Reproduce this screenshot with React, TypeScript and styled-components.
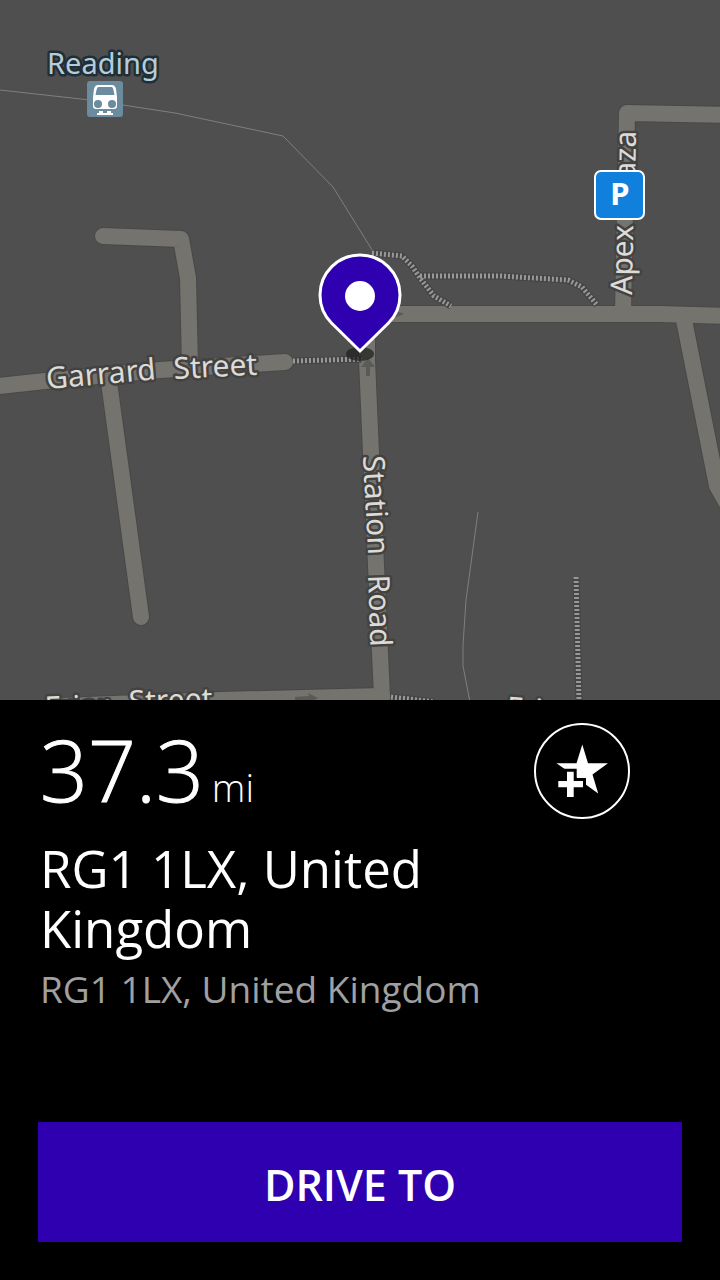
import React from "react";
import styled, { createGlobalStyle } from "styled-components";

const GlobalStyle = createGlobalStyle`
  *, *::before, *::after { box-sizing: border-box; }
  body {
    margin: 0;
    background: #000;
    color: #fff;
    font-family: "Open Sans", "Noto Sans", sans-serif;
  }
`;

const Page = styled.main`
  display: flex;
  flex-direction: column;
  min-height: 100vh;
`;

const MapCanvas = styled.svg`
  display: block;
  width: 100%;
  height: auto;
  background: #4f4f4f;
`;

const RoadEdge = styled.path`
  fill: none;
  stroke: #484847;
  stroke-width: 18px;
  stroke-linecap: round;
  stroke-linejoin: round;
`;

const RoadFill = styled(RoadEdge)`
  stroke: #74736e;
  stroke-width: 16px;
`;

const Rail = styled.path`
  fill: none;
  stroke: #7f7f7f;
  stroke-width: 1px;
`;

const FootpathEdge = styled.path`
  fill: none;
  stroke: #444;
  stroke-width: 7px;
`;

const Footpath = styled.path`
  fill: none;
  stroke: #989898;
  stroke-width: 5px;
  stroke-dasharray: 2 2;
`;

const StreetLabel = styled.text`
  font-family: "Noto Sans", "Open Sans", sans-serif;
  font-size: 30px;
  fill: #dcdbd7;
  stroke: #434240;
  stroke-width: 5px;
  stroke-linejoin: round;
  paint-order: stroke;
`;

const StationLabel = styled(StreetLabel)`
  font-size: 29px;
  fill: #b4cddb;
  stroke: #222e35;
`;

const ParkingLetter = styled.text`
  font-family: "Noto Sans", "Open Sans", sans-serif;
  font-size: 31px;
  font-weight: 700;
  fill: #fff;
  text-anchor: middle;
`;

const Panel = styled.section`
  flex: 1;
  display: flex;
  flex-direction: column;
  padding: 22px 38px 38px;
`;

const Details = styled.div`
  padding: 0 2px 40px;
`;

const Summary = styled.div`
  display: flex;
  justify-content: space-between;
  align-items: flex-start;
  height: 116px;
  padding-right: 50px;
`;

const Distance = styled.p`
  margin: 0;
  font-size: 84px;
  line-height: 96px;
  font-weight: 300;
  -webkit-text-stroke: 1px #fff;
`;

const Unit = styled.span`
  margin-left: 8px;
  font-size: 38px;
  -webkit-text-stroke: 0;
`;

const FavouriteButton = styled.button`
  flex: none;
  width: 96px;
  height: 96px;
  margin-top: 1px;
  padding: 0;
  border: 2px solid #fff;
  border-radius: 50%;
  background: transparent;
  color: #fff;
  cursor: pointer;

  svg {
    display: block;
    width: 100%;
    height: 100%;
  }
`;

const PlaceName = styled.h1`
  max-width: 440px;
  margin: 0;
  font-size: 51px;
  line-height: 60px;
  font-weight: 400;
`;

const PlaceAddress = styled.p`
  margin: 6px 0 0;
  font-size: 37px;
  line-height: 50px;
  color: #a0a0a0;
`;

const DriveButton = styled.button`
  height: 120px;
  margin-top: auto;
  padding: 4px 0 0;
  border: 0;
  background: #2e00b0;
  color: #fff;
  font-family: inherit;
  font-size: 43px;
  font-weight: 600;
  cursor: pointer;
`;

const roads = [
  "M103 236 L181 239 L188 278 L190 368",
  "M-10 387 L45 381 L160 370 L285 362",
  "M109 382 L141 617",
  "M367 314 L367 360 L370 430 L376 565 L382 697",
  "M367 314 L660 314 L730 316",
  "M684 320 L717 486 L732 512",
  "M623 312 L627 113 L730 115",
  "M60 706 L220 700 L382 696",
];

const footpaths = [
  "M372 253 L402 256 L412 266 L420 278 L434 296 L451 306",
  "M420 276 L500 276 L568 280 L582 287 L597 305",
  "M293 361 L362 359",
  "M576 577 L579 702",
  "M391 697 L435 702",
];

const rails = [
  "M0 90 L90 100 L175 113 L283 136 L333 187 L374 253",
  "M478 512 L466 600 L463 645 L463 666 L470 702",
];

function DestinationMap() {
  return (
    <MapCanvas viewBox="0 0 720 700" role="img" aria-label="Map around Station Road, Reading">
      {rails.map((d) => <Rail key={d} d={d} />)}
      {roads.map((d) => <RoadEdge key={d} d={d} />)}
      {roads.map((d) => <RoadFill key={d} d={d} />)}
      {footpaths.map((d) => <FootpathEdge key={d} d={d} />)}
      {footpaths.map((d) => <Footpath key={d} d={d} />)}

      <g fill="#5a5a57">
        <path d="M295 697 L309 696 L308 693 L318 698 L309 703 L309 700 L295 701 Z" />
        <path d="M366 376 V367 H361 L368 358 L375 367 H370 V376 Z" />
        <path d="M392 309 L404 314 L392 319 Z" />
      </g>

      <StreetLabel transform="translate(47 389) rotate(-5)">Garrard</StreetLabel>
      <StreetLabel transform="translate(174 379) rotate(-3)">Street</StreetLabel>
      <StreetLabel transform="translate(363 456) rotate(87)">Station</StreetLabel>
      <StreetLabel transform="translate(368 575) rotate(88)">Road</StreetLabel>
      <StreetLabel transform="translate(632 295) rotate(-89)">Apex</StreetLabel>
      <StreetLabel transform="translate(636 131) rotate(-89)" textAnchor="end">Plaza</StreetLabel>
      <StreetLabel transform="translate(45 718) rotate(-2)">Friar</StreetLabel>
      <StreetLabel transform="translate(129 712) rotate(-2)">Street</StreetLabel>
      <StreetLabel transform="translate(506 718) rotate(4)">Friar</StreetLabel>

      <StationLabel x="47" y="74">Reading</StationLabel>
      <rect x="87" y="81" width="36" height="36" rx="3" fill="#6b8b9f" />
      <path
        fill="#fff"
        fillRule="evenodd"
        d="M98 85 H112 Q115 85 116 89 L117 97 V106 Q117 109 114 109 H96 Q93 109 93 106 V97 L94 89 Q95 85 98 85 Z M98.500 87 Q97 87 96.500 90 L95.500 95 H114.500 L113.500 90 Q113 87 111.500 87 Z"
      />
      <circle cx="98" cy="104" r="4" fill="#6b8b9f" />
      <circle cx="112" cy="104" r="4" fill="#6b8b9f" />
      <path fill="#fff" d="M99 111 H103 V113 H107 V111 H111 V113 H113 V115 H97 V113 H99 Z" />

      <rect x="595" y="171" width="49" height="48" rx="6" fill="#1180dd" stroke="#fff" strokeWidth="2" />
      <ParkingLetter x="620" y="205">P</ParkingLetter>

      <ellipse cx="360" cy="354" rx="14" ry="7" fill="#222" opacity="0.75" />
      <path
        d="M360 351 L331.500 323 A40 40 0 1 1 388.500 323 Z"
        fill="#2e00b0"
        stroke="#fff"
        strokeWidth="3"
      />
      <circle cx="360" cy="296" r="15" fill="#fff" />
    </MapCanvas>
  );
}

function AddStarIcon() {
  return (
    <svg viewBox="2 2 92 92" aria-hidden="true">
      <path
        fill="currentColor"
        d="M48.300 21.500 L54 40.300 H74 L58.500 51.500 L64.200 70.500 L48.300 59 L38.500 51.500 L22.500 40.300 H42.500 Z"
      />
      <path
        d="M33 48.700 H39.700 V58 H49 V64.300 H39.700 V74 H33 V64.300 H24.300 V58 H33 Z"
        fill="currentColor"
        stroke="#000"
        strokeWidth="6"
        paintOrder="stroke"
      />
    </svg>
  );
}

export default function App() {
  return (
    <>
      <GlobalStyle />
      <Page>
        <DestinationMap />
        <Panel>
          <Details>
            <Summary>
              <Distance>
                37.3<Unit>mi</Unit>
              </Distance>
              <FavouriteButton type="button" aria-label="Add to favourites">
                <AddStarIcon />
              </FavouriteButton>
            </Summary>
            <PlaceName>RG1 1LX, United Kingdom</PlaceName>
            <PlaceAddress>RG1 1LX, United Kingdom</PlaceAddress>
          </Details>
          <DriveButton type="button">DRIVE TO</DriveButton>
        </Panel>
      </Page>
    </>
  );
}
